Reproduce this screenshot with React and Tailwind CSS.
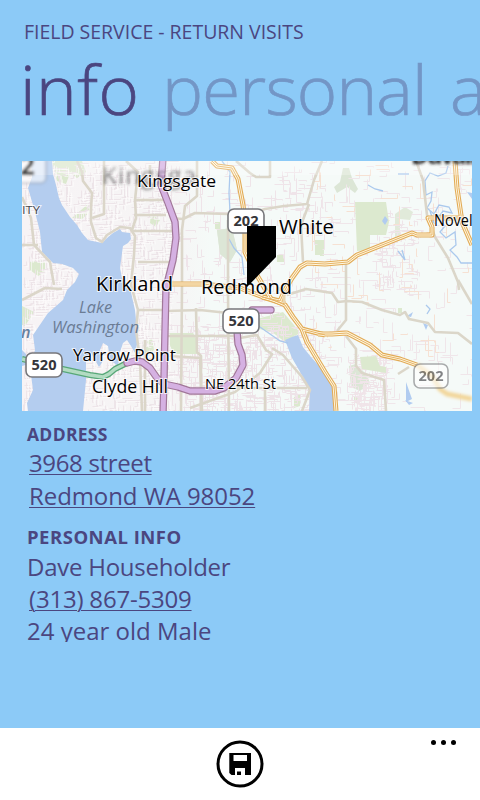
import React from "react";

const SEGOE = "font-['Open_Sans','Noto_Sans',sans-serif]";

// Deterministic generator so the small streets are stable between renders.
function makeRandom(seed) {
  let s = seed;
  return () => {
    s = (s * 1664525 + 1013904223) % 4294967296;
    return s / 4294967296;
  };
}

function streets(seed, count, x0, y0, x1, y1, maxLen) {
  const rnd = makeRandom(seed);
  let d = "";
  for (let i = 0; i < count; i++) {
    const x = Math.round(x0 + rnd() * (x1 - x0)) + 0.5;
    const y = Math.round(y0 + rnd() * (y1 - y0)) + 0.5;
    const a = Math.round(3 + rnd() * maxLen);
    const b = Math.round((rnd() - 0.5) * maxLen);
    d += rnd() > 0.5 ? `M${x} ${y}h${a}v${b}` : `M${x} ${y}v${a}h${b}`;
  }
  return d;
}

const WEST = streets(7, 1100, 22, 161, 168, 411, 11);
const MID = streets(19, 420, 168, 161, 335, 411, 13);
const SOUTH = streets(31, 480, 175, 325, 310, 411, 9);
const EAST = streets(43, 180, 320, 161, 470, 411, 16);
const EAST_DENSE = streets(53, 170, 345, 355, 386, 411, 8);
const NOVELTY = streets(61, 110, 372, 205, 415, 290, 8);
const PEACH = streets(71, 55, 310, 165, 465, 350, 16);

const ARTERIALS = [
  "M77 161L82 172L83 181L92 193L91 208L91 222L96 238L102 242L107 235L120 227L130 228L135 236L134 255L131 285L138 310L136 330L140 360L142 411",
  "M104 161V214L92 218",
  "M126 161L138 172L135 200L136 218L132 230",
  "M136 200H163",
  "M134 215H166",
  "M133 231H172",
  "M22 197L31 218L34 245L50 262L54 285",
  "M22 245H38",
  "M22 300L45 288L62 289",
  "M150 165V178M138 262H170M138 310H163M145 340V411",
  "M170 218L183 219L195 213L228 214",
  "M197 161V196L185 206L182 230V285L181 411",
  "M250 214L265 209L284 206L307 204L314 180L322 161",
  "M309 204L301 225L303 262",
  "M236 161L250 173L256 177H270V161",
  "M228 220V295M167 311L200 310L228 313",
  "M228 290L229 411M167 336H240M170 356L200 358L202 411",
  "M196 308L197 352L201 356L201 411",
  "M240 338L257 335L266 350L272 354L260 373L235 392L190 408",
  "M272 348L283 355L302 377L310 390L302 411",
  "M228 388H307M265 388V411",
  "M287 295L306 289L332 293L338 302L347 301L362 302L382 310L400 315L405 312L409 319L428 323L435 332L458 333L472 344",
  "M346 262V320L337 331M346 336L356 349V366L362 373L384 380L386 411",
  "M416 161L423 180L427 215L435 237L448 258L458 282L459 290",
  "M458 280L472 304",
  "M398 374L409 367",
];

const ORANGE = [
  "M212 161L217 166L232 168L238 179L243 205L245 222V252L252 267L261 282L271 299L285 305L293 317L302 329L325 335",
  "M318 334L332 334L347 333L370 345L382 355L400 359L417 365",
  "M302 329L307 342L325 372L334 386L336 411",
  "M262 297L280 301L285 290L292 278L300 267L307 263L325 264L348 262L357 255L387 243L412 233L417 235H432V227L428 218H460",
  "M455 161L457 188L462 222L472 245",
  "M168 284H203L240 288L263 297L285 304",
];

function Roads({ paths, stroke, width }) {
  return (
    <g fill="none" stroke={stroke} strokeWidth={width} strokeLinejoin="round">
      {paths.map((d, i) => (
        <path key={i} d={d} />
      ))}
    </g>
  );
}

function Shield({ x, y, w = 36, h = 24, label, opacity = 1 }) {
  return (
    <g opacity={opacity}>
      <rect x={x} y={y} width={w} height={h} rx="6" fill="#fff" stroke="#77777b" strokeWidth="1.6" />
      <text x={x + w / 2} y={y + 17} textAnchor="middle" textLength="25" lengthAdjust="spacingAndGlyphs" fontSize="14.5" fontWeight="700" fill="#35353a">
        {label}
      </text>
    </g>
  );
}

function Place({ x, y, w, size, children, ...rest }) {
  return (
    <text x={x} y={y} textLength={w} lengthAdjust="spacingAndGlyphs" fontSize={size} stroke="#fff" strokeOpacity="0.75" strokeWidth="2" paintOrder="stroke" {...rest}>
      {children}
    </text>
  );
}

const PURPLE = [
  "M163 158L161 185L168 203L175 222L176 238L173 260L166 288L165 330L164 380L163 414",
  "M127 363L135 361L142 362L150 368L157 378L164 384L178 387L190 391H215L224 388L236 378L243 365L242 355L238 344L237 330",
  "M252 310H271",
];

const GREEN = ["M22 359L58 368L90 375L103 377L109 374L115 369L127 363"];

function AreaMap() {
  return (
    <svg className={`block h-[250px] w-[450px] ${SEGOE}`} viewBox="22 161 450 250">
      <defs>
        <filter id="soft" x="-20%" y="-50%" width="140%" height="200%">
          <feGaussianBlur stdDeviation="1.5" />
        </filter>
        <linearGradient id="land">
          <stop offset="0" stopColor="#f7f3f5" />
          <stop offset="0.34" stopColor="#f6f5f5" />
          <stop offset="0.42" stopColor="#f5faf8" />
          <stop offset="1" stopColor="#f5faf8" />
        </linearGradient>
        <linearGradient id="fadeText" x1="0" y1="0" x2="0" y2="1">
          <stop offset="0.3" stopColor="#333" stopOpacity="0.45" />
          <stop offset="0.8" stopColor="#333" stopOpacity="0.7" />
        </linearGradient>
      </defs>
      <rect x="22" y="161" width="450" height="250" fill="url(#land)" />

      <g fill="#dce9cf">
        <path d="M52 161H82L86 172L77 178L70 173L66 184L57 181Z" />
        <path d="M88 204L91 211L82 219L72 218L80 211Z" />
        <path d="M151 214L160 220L156 227L150 223Z" />
        <path d="M30 262L45 260V272L38 276L30 270Z" />
        <path d="M22 306L34 312L25 326L22 325Z" />
        <path d="M120 305L134 306L131 316L122 312Z" />
        <path d="M217 230L232 228L237 250L230 262L220 254Z" fill="#dce6d6" />
        <path d="M215 222h6v7h-6zM315 240h9v15h-9zM277 255h7v7h-7zM320 241h4v15h-4z" />
        <path d="M170 333H193L197 341V354H174L170 345Z" />
        <path d="M245 322L283 312L294 325L300 333L285 342L272 332L255 328Z" />
        <path d="M343 168H349L352 178L358 189L355 193L347 187L337 193L334 187L340 182Z" fill="#dce6d6" />
        <path d="M395 214L405 207L413 212L410 220L400 219V235L395 237Z" fill="#e1eada" />
        <path d="M349 366L356 364L366 374L370 383L360 391L351 387Z" fill="#dce6d6" />
        <path d="M354 396h5v7h-5zM398 308h4v5h-4zM294 397L300 394V406L294 408Z" />
        <path d="M143 345L152 338L154 350L147 356Z" />
      </g>

      <path d={WEST} fill="none" stroke="#ece3e8" strokeWidth="0.9" />
      <path d={WEST} transform="translate(2 1)" fill="none" stroke="#fdfbfc" strokeWidth="0.6" />
      <path d={MID} fill="none" stroke="#efe4e9" strokeWidth="1" />
      <path d={SOUTH} fill="none" stroke="#eee3e8" strokeWidth="1" />
      <path d={EAST} fill="none" stroke="#f0e6ea" strokeWidth="1" />
      <path d={EAST_DENSE} fill="none" stroke="#f0e4e9" strokeWidth="1" />
      <path d={NOVELTY} fill="none" stroke="#efe4e9" strokeWidth="1" />
      <path d={PEACH} fill="none" stroke="#f6e1d3" strokeWidth="1" />

      <g fill="#dce9cf">
        <path d="M355 202H386L389 222L386 235H370V250L357 251Z" />
        <path d="M360 357L376 356L380 366L386 367V373L362 369Z" />
        <path d="M217 230L232 228L237 250L230 262L220 254Z" fill="#dce6d6" />
        <path d="M170 333H193L197 341V354H174L170 345Z" />
      </g>

      <path
        fill="#b4cdef"
        d="M31 161H52L53 174L56 185L59 198L62 205L70 217L77 225L82 233L88 240L102 243L107 238L113 233L120 229L122 232L130 233L131 239L128 243L123 246L120 268L122 278L130 288L135 310L138 340L135 353L131 346L127 340L123 343L120 352L118 366L110 360L108 346L103 343L100 350L103 361L99 367L91 353L86 362V380L83 411H28L27 403L33 390L30 367L35 350L33 335L48 313L55 307L63 300L67 290L75 282L79 274L73 268L62 264L53 263L42 252L40 232L35 212L28 188L32 177Z"
      />
      <path fill="#b4cdef" d="M285 340L292 337L298 335L303 347L311 357L320 367L330 378L335 390L337 411H309L310 393L303 377L292 358Z" />
      <path fill="#b4cdef" d="M22 350L26 354V365L22 366Z" />
      <g fill="none" stroke="#abc9ed" strokeWidth="1.3">
        <path d="M222 161L230 172L229 193L230 212M229 239L234 248L242 257L244 275" />
        <path d="M248 322L260 327L270 334L280 341L288 343" />
        <path d="M448 166L446 173L438 176L430 173L425 181L426 195L432 192L431 201L427 208L434 214L439 205L449 207L452 213L443 211L438 218L445 226L440 232L446 238L455 232L456 245L450 250L457 257L461 263H472" />
        <path d="M428 219L434 223L430 211M398 174H409M368 185L375 189L383 191M398 251L405 260L402 250M426 305L430 309L427 314" />
      </g>
      <path fill="#b1ccf0" d="M385 216L388 220L385 225L382 221ZM467 192L472 193V199ZM406 382L412 399L406 402ZM423 323L428 325L426 330ZM407 316L413 312L411 317ZM405 400L413 403L409 405Z" />

      <Roads paths={ARTERIALS} stroke="#dbd6c9" width="2.6" />

      <Roads paths={ORANGE} stroke="#e2ab57" width="5" />
      <Roads paths={ORANGE} stroke="#fff8e2" width="2.8" />
      <Roads paths={ORANGE} stroke="#e6b365" width="1" />
      <path d="M417 365L432 376L440 389L447 394L472 399" fill="none" stroke="#f2d69a" strokeWidth="5" filter="url(#soft)" />
      <path d="M284 303L284 292L278 288" fill="none" stroke="#ebd7b1" strokeWidth="3" />

      <Roads paths={GREEN} stroke="#58a878" width="6" />
      <Roads paths={GREEN} stroke="#b3dcc2" width="3.4" />
      <g strokeLinecap="round">
        <Roads paths={PURPLE} stroke="#a17799" width="7.4" />
        <Roads paths={PURPLE} stroke="#d5b1e2" width="5" />
      </g>

      <rect x="22" y="161" width="450" height="14" fill="#fff" opacity="0.25" />
      <g filter="url(#soft)">
        <rect x="0" y="140" width="46" height="43" rx="5" fill="#fff" opacity="0.6" stroke="#8890a0" strokeWidth="1.5" />
        <text x="20" y="175" fontSize="26" fontWeight="700" fill="#333" textLength="16">2</text>
        <text x="102" y="184" fontSize="24" fill="url(#fadeText)" textLength="94">Kingsga</text>
        <text x="411" y="164" fontSize="24" fontWeight="700" fill="#222" textLength="66">Duvall</text>
      </g>

      <Place x="137" y="187" w="79" size="16">Kingsgate</Place>
      <Place x="22" y="214" w="18" size="11.5" fill="#4a4a50">ITY</Place>
      <Place x="21" y="338" w="9.5" size="17" fontWeight="600" fill="#67809f" fontStyle="italic" strokeOpacity="0">n</Place>
      <g fill="#6b7c95" fontStyle="italic">
        <Place x="79" y="313" w="33" size="16.5" strokeOpacity="0">Lake</Place>
        <Place x="52" y="333" w="87" size="16.5" strokeOpacity="0">Washington</Place>
      </g>
      <Place x="96" y="291" w="77" size="19.5">Kirkland</Place>
      <Place x="73" y="361" w="103" size="17">Yarrow Point</Place>
      <Place x="92" y="393" w="76" size="17.5">Clyde Hill</Place>
      <Place x="205" y="389" w="71" size="14">NE 24th St</Place>
      <Place x="434" y="226" w="51" size="15.5">Novelty</Place>
      <Place x="201" y="294" w="91" size="19.5">Redmond</Place>

      <Shield x={228} y={209} label="202" />
      <Shield x={223} y={309} label="520" />
      <Shield x={26} y={353} label="520" />
      <Shield x={414} y={364} w={34} label="202" opacity={0.6} />

      <path d="M247 226H276V257L247 287Z" fill="#000" />
      <Place x="279" y="234" w="55" size="19.5" strokeOpacity="0.4">White</Place>
    </svg>
  );
}

function SaveIcon() {
  return (
    <svg className="h-12 w-12" viewBox="0 0 48 48">
      <circle cx="24" cy="24" r="22" fill="none" stroke="#000" strokeWidth="3" />
      <path fillRule="evenodd" fill="#000" d="M13.3 13H35V35H15.5L13.3 33ZM17.5 15V21H31V15ZM19 28V35H29V28ZM21 31.5H25V35H21Z" />
    </svg>
  );
}

export default function App() {
  return (
    <div className={`flex h-[800px] w-[480px] flex-col overflow-hidden bg-[#8ccaf7] text-[#4b4680] ${SEGOE}`}>
      <header className="h-[161px] shrink-0 overflow-hidden whitespace-nowrap pl-6 pt-[18px]">
        <div className="h-7 text-[19.5px] leading-7 tracking-[-0.02px]">FIELD SERVICE - RETURN VISITS</div>
        <div className="-ml-1 flex h-[100px] text-[69px] font-light leading-[85px] [-webkit-text-stroke:0.7px_currentColor]">
          <span className="w-[142px] shrink-0 tracking-[0.5px]">info</span>
          <span className="w-[288px] shrink-0 tracking-[-0.8px] text-[#7396c6]">personal</span>
          <span className="shrink-0 text-[#7396c6]">address</span>
        </div>
      </header>

      <div className="shrink-0 pl-[22px]">
        <AreaMap />
      </div>

      <main className="flex-1 whitespace-nowrap pl-[27px] pt-[11px]">
        <h2 className="h-6 text-[17.5px] font-bold leading-6 tracking-[0.3px]">ADDRESS</h2>
        <div className="pl-0.5 text-2xl leading-[33px] underline decoration-1 underline-offset-2">
          <div className="tracking-[-0.35px]">3968 street</div>
          <div className="tracking-[-0.08px]">Redmond WA 98052</div>
        </div>
        <h2 className="mt-[13px] h-[26px] text-[18.5px] font-bold leading-6 tracking-[0.5px]">PERSONAL INFO</h2>
        <div className="text-2xl leading-8">
          <div className="tracking-[-0.25px]">Dave Householder</div>
          <div className="pl-0.5 tracking-[-0.2px] underline decoration-1 underline-offset-2">(313) 867-5309</div>
          <div className="h-[27px] overflow-hidden">24 year old Male</div>
        </div>
      </main>

      <footer className="grid h-[72px] shrink-0 grid-cols-[216px_48px_216px] items-start bg-white">
        <div className="col-start-2 pt-3">
          <SaveIcon />
        </div>
        <div className="flex justify-end gap-[5px] pr-6 pt-3">
          <span className="size-[5px] rounded-full bg-black" />
          <span className="size-[5px] rounded-full bg-black" />
          <span className="size-[5px] rounded-full bg-black" />
        </div>
      </footer>
    </div>
  );
}
